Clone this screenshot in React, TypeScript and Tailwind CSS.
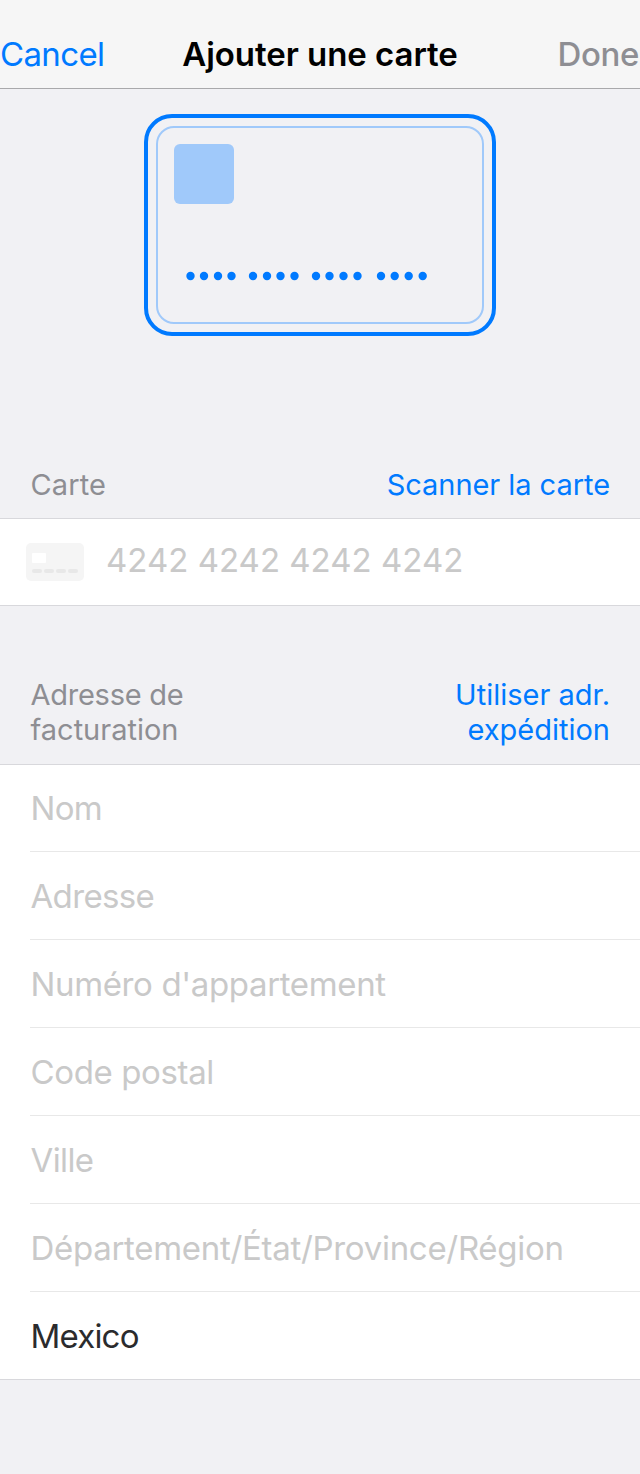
const fields = [
  { label: "Nom", style: "h-[87px] pt-[1px] tracking-[-0.7px]" },
  { label: "Adresse", style: "h-[88px] pt-[2px] tracking-[-0.65px]" },
  { label: "Numéro d'appartement", style: "h-[88px] pt-[2px] tracking-[-0.36px]" },
  { label: "Code postal", style: "h-[88px] pt-[2px] tracking-[-0.37px]" },
  { label: "Ville", style: "h-[88px] pt-[2px] tracking-[-0.6px]" },
  { label: "Département/État/Province/Région", style: "h-[88px] pt-[2px] tracking-[-0.3px]" },
];

const dots = [190.5, 204, 218, 231.5, 253, 267, 280.5, 294.5, 316, 329.5, 343.5, 357.5, 381, 394.7, 408.7, 422.7];

export default function App() {
  return (
    <div className="flex h-[1474px] w-[640px] flex-col overflow-hidden bg-[#f1f1f4] font-['Inter',sans-serif]">
      <header className="flex h-[89px] shrink-0 items-end justify-between border-b border-[#a9a9ab] bg-[#f6f6f6] pb-[12px] text-[33px] leading-[44px] whitespace-nowrap">
        <span className="w-[120px] tracking-[-0.65px] text-[#007aff]">Cancel</span>
        <h1 className="font-semibold tracking-[-0.05px] text-black">Ajouter une carte</h1>
        <span className="w-[120px] pr-[1px] text-right font-medium tracking-[-0.4px] text-[#8e8e93]">Done</span>
      </header>
      <section className="flex h-[368px] shrink-0 justify-center pt-[25px]">
        <svg width="352" height="222" viewBox="144 114 352 222">
          <rect x="146" y="116" width="348" height="218" rx="26" fill="none" stroke="#007aff" strokeWidth="4" />
          <rect x="157" y="127" width="326" height="196" rx="17" fill="none" stroke="#a0c9fa" strokeWidth="2" />
          <rect x="174" y="144" width="60" height="60" rx="6" fill="#a0c9fa" />
          {dots.map((x) => <circle key={x} cx={x} cy="276" r="4.2" fill="#007aff" />)}
        </svg>
      </section>
      <div className="flex h-[61px] shrink-0 justify-between px-[30px] pt-[10px] text-[29px] leading-[35px]">
        <span className="pl-[0.5px] tracking-[0.1px] text-[#8e8e93]">Carte</span>
        <span className="tracking-[-0.05px] text-[#007aff]">Scanner la carte</span>
      </div>
      <div className="flex h-[88px] shrink-0 items-center border-y border-[#d8d8dc] bg-white pl-[26px]">
        <svg width="58" height="38" viewBox="0 0 58 38">
          <rect width="58" height="38" rx="5" fill="#f5f5f5" />
          <rect x="6" y="10" width="14" height="10" rx="1" fill="#fff" />
          {[6, 18, 30, 42].map((x) => <rect key={x} x={x} y="26" width="10" height="4" rx="2" fill="#e8e8e8" />)}
        </svg>
        <span className="ml-[22px] pb-[2px] text-[33px] text-[#c9c9c9]">4242 4242 4242 4242</span>
      </div>
      <div className="flex h-[158px] shrink-0 justify-between px-[30px] pt-[71px] text-[29px] leading-[35px]">
        <span className="pl-[0.5px] text-[#8e8e93]"><span className="tracking-[-0.25px]">Adresse de</span><br />facturation</span>
        <span className="text-right text-[#007aff]">Utiliser adr.<br />expédition</span>
      </div>
      <div className="shrink-0 border-y border-[#d8d8dc] bg-white pl-[30px] text-[33px]">
        {fields.map((f) => (
          <div key={f.label} className={`flex items-center border-b border-[#e8e8e8] pl-[0.5px] text-[#c9c9c9] ${f.style}`}>{f.label}</div>
        ))}
        <div className="flex h-[87px] items-center pt-[2px] pl-[0.5px] tracking-[-0.8px] text-[#2b2b2d]">Mexico</div>
      </div>
    </div>
  );
}
